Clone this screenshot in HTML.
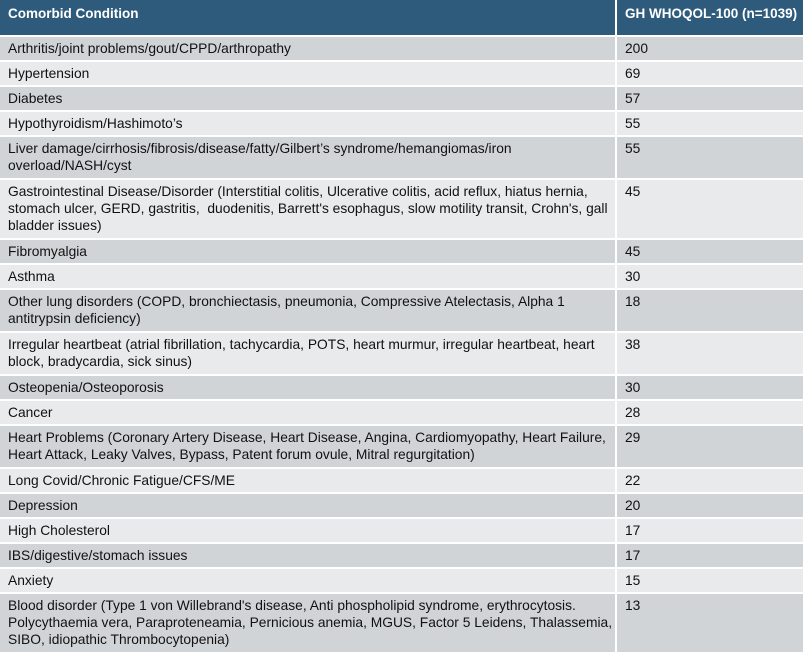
<!DOCTYPE html>
<html><head><meta charset="utf-8"><style>
html,body{margin:0;padding:0;background:#fff;}
body{width:803px;height:652px;overflow:hidden;font-family:"Liberation Sans",Arial,sans-serif;}
table{border-collapse:collapse;width:803px;table-layout:fixed;}
td,th{border:2px solid #fff;padding:3px 8px 3px 8px;font-size:13.8px;line-height:17px;color:#111;vertical-align:top;text-align:left;white-space:nowrap;overflow:hidden;}
td.m{padding-bottom:4px;}
th{background:#2e5b7c;color:#fff;font-weight:bold;height:27px;vertical-align:top;padding-top:5px;border-top:0;font-size:13.5px;}
tr:nth-child(odd) td{background:#d1d4d7;}
tr:nth-child(even) td{background:#e8eaec;}
tr td:first-child, tr th:first-child{border-left:0;}
tr td:last-child, tr th:last-child{border-right:0;}
</style></head><body>
<table>
<colgroup><col style="width:616px"><col style="width:187px"></colgroup>
<thead><tr><th>Comorbid Condition</th><th>GH WHOQOL-100 (n=1039)</th></tr></thead>
<tbody>
<tr><td>Arthritis/joint problems/gout/CPPD/arthropathy</td><td>200</td></tr>
<tr><td>Hypertension</td><td>69</td></tr>
<tr><td>Diabetes</td><td>57</td></tr>
<tr><td>Hypothyroidism/Hashimoto’s</td><td>55</td></tr>
<tr><td class="m">Liver damage/cirrhosis/fibrosis/disease/fatty/Gilbert’s syndrome/hemangiomas/iron<br>overload/NASH/cyst</td><td class="m">55</td></tr>
<tr><td class="m">Gastrointestinal Disease/Disorder (Interstitial colitis, Ulcerative colitis, acid reflux, hiatus hernia,<br>stomach ulcer, GERD, gastritis,&nbsp; duodenitis, Barrett's esophagus, slow motility transit, Crohn's, gall<br>bladder issues)</td><td class="m">45</td></tr>
<tr><td>Fibromyalgia</td><td>45</td></tr>
<tr><td>Asthma</td><td>30</td></tr>
<tr><td class="m">Other lung disorders (COPD, bronchiectasis, pneumonia, Compressive Atelectasis, Alpha 1<br>antitrypsin deficiency)</td><td class="m">18</td></tr>
<tr><td class="m">Irregular heartbeat (atrial fibrillation, tachycardia, POTS, heart murmur, irregular heartbeat, heart<br>block, bradycardia, sick sinus)</td><td class="m">38</td></tr>
<tr><td>Osteopenia/Osteoporosis</td><td>30</td></tr>
<tr><td>Cancer</td><td>28</td></tr>
<tr><td class="m">Heart Problems (Coronary Artery Disease, Heart Disease, Angina, Cardiomyopathy, Heart Failure,<br>Heart Attack, Leaky Valves, Bypass, Patent forum ovule, Mitral regurgitation)</td><td class="m">29</td></tr>
<tr><td>Long Covid/Chronic Fatigue/CFS/ME</td><td>22</td></tr>
<tr><td>Depression</td><td>20</td></tr>
<tr><td>High Cholesterol</td><td>17</td></tr>
<tr><td>IBS/digestive/stomach issues</td><td>17</td></tr>
<tr><td>Anxiety</td><td>15</td></tr>
<tr><td class="m">Blood disorder (Type 1 von Willebrand's disease, Anti phospholipid syndrome, erythrocytosis.<br>Polycythaemia vera, Paraproteneamia, Pernicious anemia, MGUS, Factor 5 Leidens, Thalassemia,<br>SIBO, idiopathic Thrombocytopenia)</td><td class="m">13</td></tr>
</tbody></table>
</body></html>
